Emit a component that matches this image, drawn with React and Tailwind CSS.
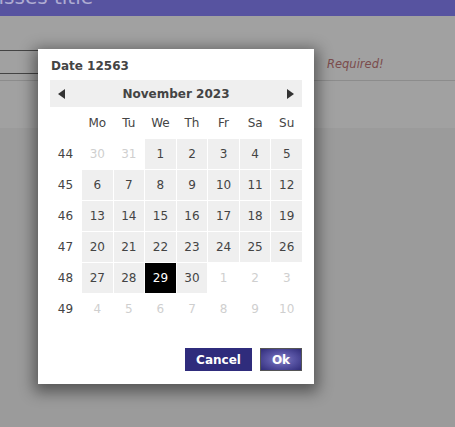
import React from 'react';

const weeks = [
  { wk: 44, days: [[30, 0], [31, 0], [1, 1], [2, 1], [3, 1], [4, 1], [5, 1]] },
  { wk: 45, days: [[6, 1], [7, 1], [8, 1], [9, 1], [10, 1], [11, 1], [12, 1]] },
  { wk: 46, days: [[13, 1], [14, 1], [15, 1], [16, 1], [17, 1], [18, 1], [19, 1]] },
  { wk: 47, days: [[20, 1], [21, 1], [22, 1], [23, 1], [24, 1], [25, 1], [26, 1]] },
  { wk: 48, days: [[27, 1], [28, 1], [29, 2], [30, 1], [1, 0], [2, 0], [3, 0]] },
  { wk: 49, days: [[4, 0], [5, 0], [6, 0], [7, 0], [8, 0], [9, 0], [10, 0]] },
];

const dayNames = ['Mo', 'Tu', 'We', 'Th', 'Fr', 'Sa', 'Su'];

const Arrow = ({ dir }) => (
  <svg width="8" height="10" viewBox="0 0 8 10">
    {dir === 'left' ? <path d="M7 0 L0 5 L7 10 Z" fill="#333" /> : <path d="M1 0 L8 5 L1 10 Z" fill="#333" />}
  </svg>
);

const DayCell = ({ n, kind }) => {
  if (kind === 2) return <div className="flex items-center justify-center bg-black text-white">{n}</div>;
  if (kind === 1) return <div className="flex items-center justify-center bg-[#efefef] text-[#444]">{n}</div>;
  return <div className="flex items-center justify-center text-[#cfcfcf]">{n}</div>;
};

export default function App() {
  return (
    <div className="relative w-[455px] h-[427px] overflow-hidden bg-[#9b9b9b] font-['DejaVu_Sans',sans-serif]">
      <div className="h-[16px] overflow-hidden bg-[#5753a0]">
        <div className="-mt-[13px] -ml-[21px] text-[20px] leading-[20px] text-[#aeacd2] whitespace-nowrap">misses title</div>
      </div>
      <div className="h-[112px] bg-[#a1a1a1] pt-[34px]">
        <div className="flex h-[31px] border-b border-[#8c8c8c]">
          <div className="-ml-[10px] w-[324px] h-[24px] border border-[#444]" />
          <div className="ml-[13px] mt-[6px] text-[11.5px] italic text-[#7b4c4c]">Required!</div>
        </div>
      </div>

      <div className="absolute left-[38px] top-[49px] w-[276px] h-[335px] bg-white px-[12px] pt-[9px] shadow-[0_4px_14px_4px_rgba(0,0,0,0.45)]">
        <div className="pl-px text-[12px] leading-[16px] font-bold text-[#444]">Date 12563</div>
        <div className="mt-[6px] h-[27px] bg-[#efefef] flex items-center justify-between px-[8px]">
          <Arrow dir="left" />
          <div className="text-[12px] font-bold text-[#444]">November 2023</div>
          <Arrow dir="right" />
        </div>
        <div className="grid grid-cols-[31px_repeat(7,1fr)] grid-rows-[31px_repeat(6,30px)] gap-px text-[12px] text-[#444]">
          <div />
          {dayNames.map((d) => (
            <div key={d} className="flex items-center justify-center">{d}</div>
          ))}
          {weeks.map((w) => (
            <React.Fragment key={w.wk}>
              <div className="flex items-center justify-center">{w.wk}</div>
              {w.days.map(([n, k], i) => (
                <DayCell key={i} n={n} kind={k} />
              ))}
            </React.Fragment>
          ))}
        </div>
        <div className="mt-[24px] flex justify-end gap-[8px]">
          <button className="w-[67px] h-[23px] bg-[#2f2c7c] text-white text-[12px] font-bold">Cancel</button>
          <button className="w-[42px] h-[23px] border border-[#555] bg-[radial-gradient(ellipse_at_center,#8a87c6_0%,#5a56a6_45%,#302c7a_100%)] text-white text-[12px] font-bold">Ok</button>
        </div>
      </div>
    </div>
  );
}
